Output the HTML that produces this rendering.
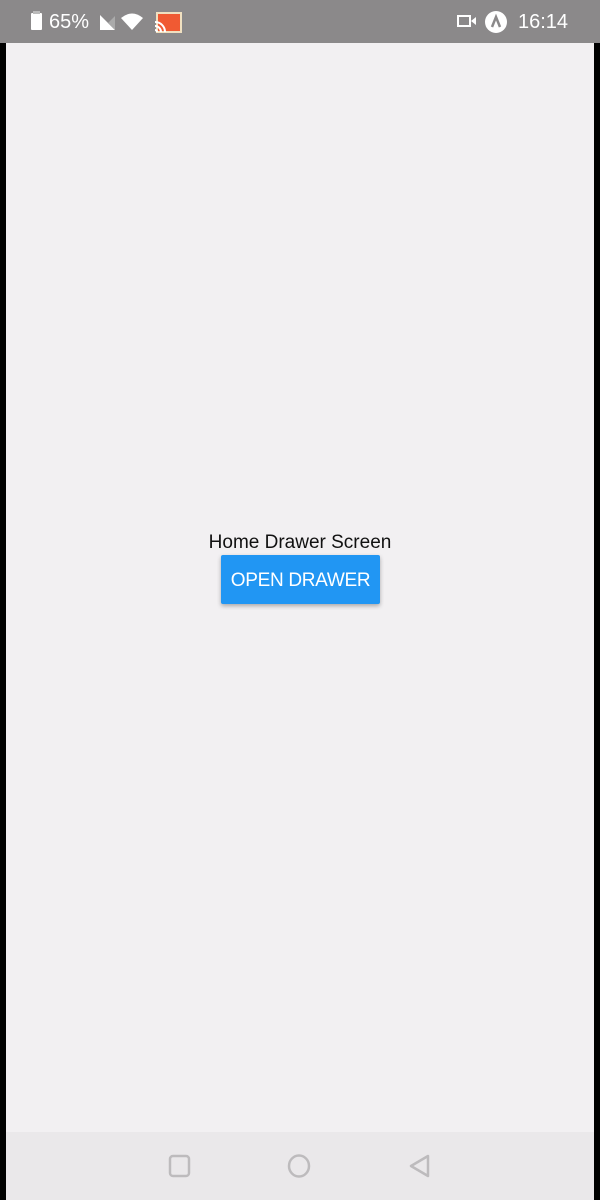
<!DOCTYPE html>
<html><head><style>
body{margin:0;width:600px;height:1200px;background:#000;position:relative;overflow:hidden;font-family:"Liberation Sans",sans-serif}
.sb{position:absolute;left:0;top:0;width:600px;height:43px;background:#8b898a}
.main{position:absolute;left:6px;top:43px;width:588px;height:1089px;background:#f2f0f2}
.nav{position:absolute;left:6px;top:1132px;width:588px;height:68px;background:#eae8ea}
.t{position:absolute;color:#fff;font-size:20px;top:11px}
.title{position:absolute;left:0;width:600px;top:532px;text-align:center;font-size:19px;color:#111}
.btn{position:absolute;left:221px;top:555px;width:159px;height:49px;background:#2196f3;color:#fff;font-size:19px;text-align:center;line-height:52px;border-radius:2px;box-shadow:0 2px 4px rgba(0,0,0,.3);letter-spacing:-0.3px}
</style></head><body>
<div class="sb">
<div style="position:absolute;left:31px;top:13px;width:11px;height:17px;background:#fff;border-radius:1px"></div>
<div style="position:absolute;left:33px;top:11px;width:7px;height:3px;background:#bbb"></div>
<div class="t" style="left:49px">65%</div>
<svg style="position:absolute;left:98px;top:13px" width="20" height="18"><path d="M2 17L17 17L2 2Z" fill="#fff"/><path d="M10 10L17 17L17 3Z" fill="#aaa"/></svg>
<svg style="position:absolute;left:120px;top:12px" width="26" height="20"><path d="M1 6Q12 -3 23 6L12 18Z" fill="#fff"/></svg>
<svg style="position:absolute;left:153px;top:12px" width="30" height="22"><rect x="4" y="1" width="24" height="19" fill="#f05a33" stroke="#f0e0c0" stroke-width="2"/><path d="M2 10a10 10 0 0 1 10 10M2 14a6 6 0 0 1 6 6M2 18a2 2 0 0 1 2 2" stroke="#fff" stroke-width="2" fill="none"/></svg>
<svg style="position:absolute;left:457px;top:14px" width="20" height="14"><rect x="1" y="2" width="12" height="10" fill="none" stroke="#fff" stroke-width="2"/><path d="M14 7L19 3V11Z" fill="#fff"/></svg>
<svg style="position:absolute;left:484px;top:10px" width="24" height="24"><circle cx="12" cy="12" r="11" fill="#fff"/><path d="M8 17L12 7L16 17" stroke="#8b898a" stroke-width="2.5" fill="none"/></svg>
<div class="t" style="left:518px">16:14</div>
</div>
<div class="main"></div>
<div class="title">Home Drawer Screen</div>
<div class="btn">OPEN DRAWER</div>
<div class="nav">
<svg style="position:absolute;left:162px;top:22px" width="24" height="24"><rect x="2" y="2" width="19" height="20" rx="3" fill="none" stroke="#bdbbbd" stroke-width="2.5"/></svg>
<svg style="position:absolute;left:280px;top:22px" width="26" height="26"><ellipse cx="13" cy="12" rx="10" ry="10.5" fill="none" stroke="#bdbbbd" stroke-width="2.5"/></svg>
<svg style="position:absolute;left:402px;top:22px" width="24" height="26"><path d="M20 2L3 12L20 22Z" fill="none" stroke="#bdbbbd" stroke-width="2.5" stroke-linejoin="round"/></svg>
</div>
</body></html>
